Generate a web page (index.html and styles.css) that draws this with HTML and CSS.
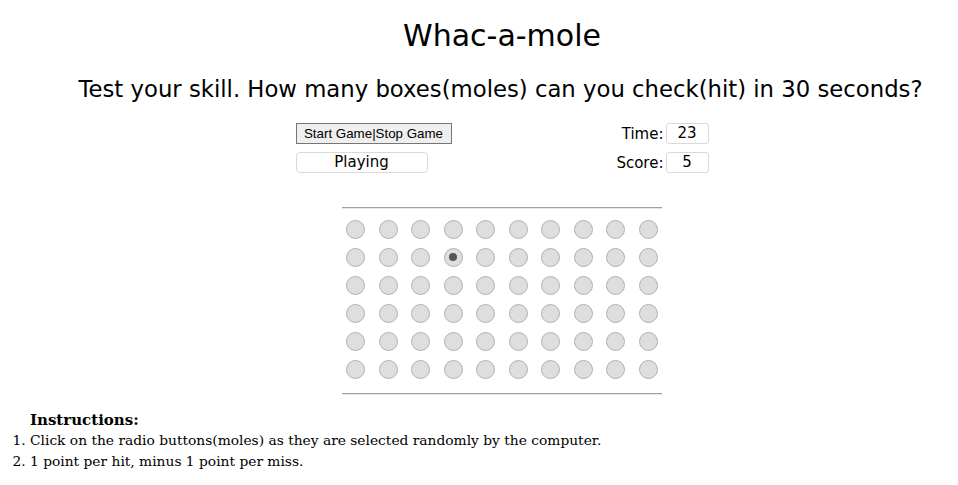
FILE: index.html
```html
<!DOCTYPE html>
<html>
<head>
<meta charset="utf-8">
<title>Whac-a-mole</title>
<link rel="stylesheet" href="styles.css">
</head>
<body>
<div class="page">
  <h1 class="title">Whac-a-mole</h1>
  <h2 class="subtitle">Test your skill. How many boxes(moles) can you check(hit) in 30 seconds?</h2>
  <div class="controls">
    <button class="start-btn" type="button">Start Game|Stop Game</button>
    <span class="label">Time:</span>
    <span class="box small">23</span>
    <span class="box status">Playing</span>
    <span class="label">Score:</span>
    <span class="box small">5</span>
  </div>
  <div class="board">
    <hr class="rule">
    <div class="grid" id="grid"></div>
    <hr class="rule">
  </div>
</div>
<div class="instructions">
  <div class="inst-title">Instructions:</div>
  <ol class="inst-list">
    <li>Click on the radio buttons(moles) as they are selected randomly by the computer.</li>
    <li>1 point per hit, minus 1 point per miss.</li>
  </ol>
</div>
<script>
  var g = document.getElementById('grid');
  for (var r = 0; r < 6; r++) {
    var row = document.createElement('div');
    row.className = 'row';
    for (var c = 0; c < 10; c++) {
      var m = document.createElement('span');
      m.className = 'mole' + (r === 1 && c === 3 ? ' on' : '');
      row.appendChild(m);
    }
    g.appendChild(row);
  }
</script>
</body>
</html>
```
FILE: styles.css
```css
html, body { margin: 0; padding: 0; background: #fff; }
body { color: #000; }
.page {
  padding: 0 0 0 54px;
  width: 896px;
  font-family: "DejaVu Sans", sans-serif;
}
.title {
  margin: 14px 0 0;
  line-height: 44px;
  font-size: 30px;
  font-weight: normal;
  text-align: center;
}
.subtitle {
  margin: 14px 0 0;
  padding-right: 3px;
  line-height: 34px;
  font-size: 22.75px;
  font-weight: normal;
  text-align: center;
}
.controls {
  margin: 17px auto 0;
  width: 413px;
  display: grid;
  grid-template-columns: auto 1fr auto;
  grid-template-rows: 21px 21px;
  row-gap: 8px;
  align-items: center;
}
.start-btn {
  justify-self: start;
  height: 21px;
  width: 156px;
  padding: 0;
  font-family: "Liberation Sans", Arial, sans-serif;
  font-size: 13.33px;
  color: #000;
  background: #efefef;
  border: 1px solid #767676;
  border-radius: 0;
}
.label {
  justify-self: end;
  font-size: 15px;
}
.box {
  box-sizing: border-box;
  height: 21px;
  line-height: 19px;
  border: 1px solid #d9d9d9;
  border-radius: 3px;
  text-align: center;
  font-size: 15px;
}
.small { width: 43px; margin-left: 2px; }
.status { width: 132px; border-radius: 4px; }
.board {
  width: 320px;
  margin: 34px auto 0;
}
.rule {
  margin: 0;
  border: 0;
  border-top: 1px solid #a0a0a0;
  border-bottom: 1px solid #e6e6e6;
  height: 0;
}
.grid { padding: 6px 0 10px; }
.row {
  display: flex;
  justify-content: space-between;
  align-items: center;
  padding: 0 4px;
  height: 28px;
}
.mole {
  box-sizing: border-box;
  width: 19px;
  height: 19px;
  border-radius: 50%;
  border: 1px solid #b0b0b0;
  background: #dedede;
  display: flex;
  align-items: center;
  justify-content: center;
}
.mole.on::after {
  content: "";
  width: 8px;
  height: 8px;
  border-radius: 50%;
  background: #555;
}
.instructions {
  margin-top: 15px;
  font-family: "DejaVu Serif", serif;
  font-size: 13.8px;
}
.inst-title {
  padding-left: 30px;
  font-weight: bold;
  font-size: 15px;
  line-height: 20px;
}
.inst-list {
  margin: 0;
  padding-left: 30px;
}
.inst-list li { line-height: 20px; }
.inst-list li + li { margin-top: 1px; }
```
